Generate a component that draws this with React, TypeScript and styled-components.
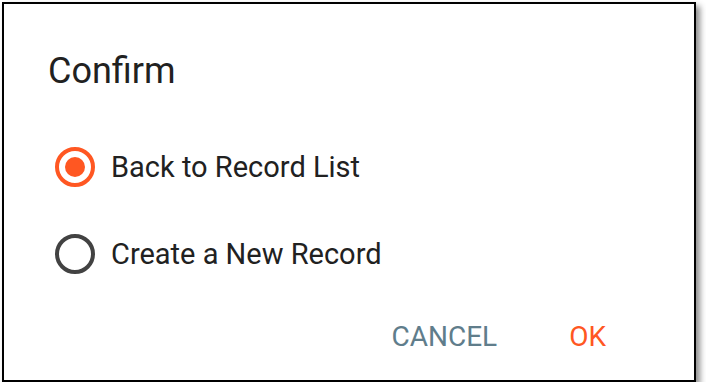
import { useState } from "react";
import styled, { createGlobalStyle } from "styled-components";

const GlobalStyle = createGlobalStyle`
  html, body {
    margin: 0;
    padding: 0;
    background: #ffffff;
  }
  body {
    font-family: Roboto, "Liberation Sans", sans-serif;
  }
`;

const options = [
  { id: "list", label: "Back to Record List" },
  { id: "new", label: "Create a New Record" },
];

export default function App() {
  const [selected, setSelected] = useState("list");

  return (
    <>
      <GlobalStyle />
      <Dialog>
        <Title>Confirm</Title>
        <OptionList>
          {options.map((opt) => (
            <OptionRow key={opt.id} onClick={() => setSelected(opt.id)}>
              <Radio $checked={selected === opt.id} />
              <OptionLabel>{opt.label}</OptionLabel>
            </OptionRow>
          ))}
        </OptionList>
        <Actions>
          <ActionButton $tone="muted">Cancel</ActionButton>
          <ActionButton $tone="primary">OK</ActionButton>
        </Actions>
      </Dialog>
    </>
  );
}

const Dialog = styled.div`
  box-sizing: border-box;
  margin: 2px 0 0 2px;
  width: 694px;
  height: 380px;
  border: 2px solid #000;
  background: #fff;
  box-shadow: 4px 4px 6px rgba(0, 0, 0, 0.45);
  display: flex;
  flex-direction: column;
  padding: 0 0 0 44px;
`;

const Title = styled.h2`
  margin: 47px 0 0 0;
  font-size: 36px;
  line-height: 40px;
  font-weight: 400;
  color: #212121;
`;

const OptionList = styled.div`
  display: flex;
  flex-direction: column;
  gap: 43px;
  margin-top: 54px;
  padding-left: 7px;
`;

const OptionRow = styled.div`
  display: flex;
  align-items: center;
  gap: 16px;
  height: 44px;
  cursor: pointer;
`;

const Radio = styled.span<{ $checked: boolean }>`
  box-sizing: border-box;
  width: 40px;
  height: 40px;
  border-radius: 50%;
  border: 4px solid ${(p) => (p.$checked ? "#ff5722" : "#424242")};
  display: flex;
  align-items: center;
  justify-content: center;

  &::after {
    content: "";
    width: 20px;
    height: 20px;
    border-radius: 50%;
    background: #ff5722;
    display: ${(p) => (p.$checked ? "block" : "none")};
  }
`;

const OptionLabel = styled.span`
  font-size: 29px;
  color: #212121;
`;

const Actions = styled.div`
  display: flex;
  justify-content: flex-end;
  gap: 44px;
  margin-top: auto;
  margin-bottom: 23px;
  padding-right: 74px;
`;

const ActionButton = styled.button<{ $tone: "muted" | "primary" }>`
  border: none;
  background: transparent;
  padding: 4px 14px;
  font-family: Roboto, "Liberation Sans", sans-serif;
  font-size: 28px;
  font-weight: 400;
  text-transform: uppercase;
  color: ${(p) => (p.$tone === "primary" ? "#ff5722" : "#607d8b")};
  cursor: pointer;
`;
